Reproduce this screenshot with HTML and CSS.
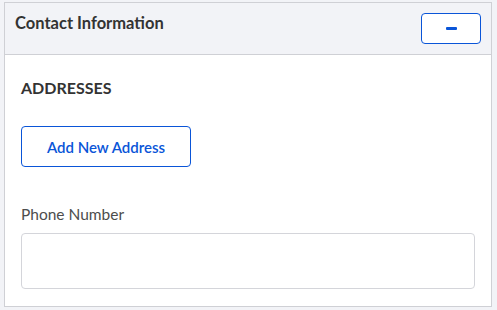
FILE: index.html
```html
<!DOCTYPE html>
<html lang="en">
<head>
    <meta charset="UTF-8">
    <meta name="viewport" content="width=device-width, initial-scale=1.0">
    <title>Contact Information</title>
    <link rel="stylesheet" href="styles.css">
</head>
<body>
    <div class="painel">
        <div class="painelTopo">
            <h2 class="titulo">Contact Information</h2>
            <button class="btnRecolher" aria-label="Recolher">
                <svg width="11" height="3" viewBox="0 0 11 3"><rect width="11" height="3" rx="1" fill="#0a55d8"/></svg>
            </button>
        </div>
        <div class="painelCorpo">
            <h3 class="secao">ADDRESSES</h3>
            <button class="btnEndereco">Add New Address</button>
            <label class="rotulo" for="telefone">Phone Number</label>
            <input type="text" id="telefone" class="campo">
        </div>
    </div>
</body>
</html>
```

FILE: styles.css
```css
body
{
    margin: 0;
    padding: 2px 5px 0 4px;
    background: #f2f3f7;
    font-family: Lato, "Open Sans", sans-serif;
    color: #333;
}

.painel
{
    border: 1px solid #cfd0d5;
    background: #fff;
}

.painelTopo
{
    display: flex;
    justify-content: space-between;
    align-items: flex-start;
    padding: 10px;
    background: #f2f3f7;
    border-bottom: 1px solid #cfd0d5;
}

.titulo
{
    margin: 0;
    font-size: 16.5px;
    line-height: 20px;
    font-weight: 700;
    color: #333;
}

.btnRecolher
{
    width: 60px;
    height: 31px;
    padding: 0;
    display: flex;
    align-items: center;
    justify-content: center;
    background: #fff;
    border: 1px solid #0a55d8;
    border-radius: 4px;
}

.painelCorpo
{
    display: flex;
    flex-direction: column;
    align-items: flex-start;
    padding: 23px 16px 17px;
}

.secao
{
    margin: 0;
    font-size: 16px;
    line-height: 20px;
    font-weight: 700;
    color: #333;
}

.btnEndereco
{
    margin-top: 28px;
    width: 170px;
    height: 41px;
    padding: 0;
    background: #fff;
    border: 1px solid #0a55d8;
    border-radius: 4px;
    font-family: Lato, "Open Sans", sans-serif;
    font-size: 15px;
    font-weight: 600;
    color: #0a55d8;
}

.rotulo
{
    margin-top: 37px;
    font-size: 15.5px;
    line-height: 20px;
    color: #4d4d4d;
}

.campo
{
    margin-top: 9px;
    box-sizing: border-box;
    width: 100%;
    height: 56px;
    border: 1px solid #d4d5da;
    border-radius: 4px;
}
```
